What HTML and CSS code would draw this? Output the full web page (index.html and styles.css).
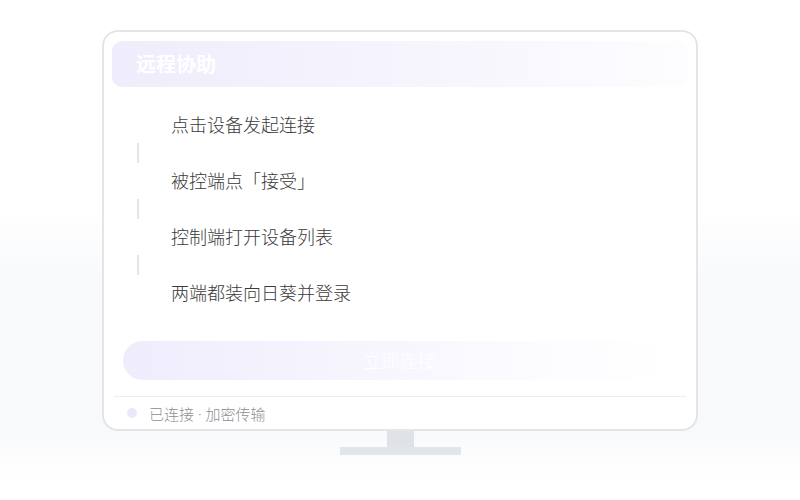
FILE: index.html
```html
<!DOCTYPE html>
<html lang="zh-CN">
<head>
<meta charset="utf-8">
<title>远程协助</title>
<link rel="stylesheet" href="styles.css">
</head>
<body>
<div class="stage">
  <div class="monitor">
    <div class="header">远程协助</div>
    <div class="steps">
      <div class="step">点击设备发起连接</div>
      <div class="connector"></div>
      <div class="step">被控端点「接受」</div>
      <div class="connector"></div>
      <div class="step">控制端打开设备列表</div>
      <div class="connector"></div>
      <div class="step">两端都装向日葵并登录</div>
    </div>
    <div class="button">立即连接</div>
    <div class="divider"></div>
    <div class="footer">
      <span class="dot"></span>
      <span class="status">已连接 · 加密传输</span>
    </div>
  </div>
  <div class="neck"></div>
  <div class="base"></div>
</div>
</body>
</html>
```
FILE: styles.css
```css
html, body {
  margin: 0;
  padding: 0;
}
body {
  width: 800px;
  height: 500px;
  overflow: hidden;
  font-family: "Noto Sans CJK SC", "Noto Sans", sans-serif;
  background: linear-gradient(180deg, #ffffff 0%, #ffffff 42%, #f8f9fb 56%, #f8f9fb 86%, #ffffff 96%);
}
.stage {
  display: flex;
  flex-direction: column;
  align-items: center;
  padding-top: 30px;
}
.monitor {
  box-sizing: border-box;
  width: 596px;
  height: 401px;
  border: 2px solid #e3e5e9;
  border-radius: 16px;
  background: #ffffff;
  padding: 9px 8px 0 8px;
  display: flex;
  flex-direction: column;
}
.header {
  height: 46px;
  border-radius: 10px;
  background: linear-gradient(90deg, #efedfc 0%, #f5f3fd 45%, #fdfdff 100%);
  color: #ffffff;
  font-size: 20px;
  font-weight: 700;
  line-height: 46px;
  padding-left: 24px;
}
.steps {
  margin-top: 20px;
  display: flex;
  flex-direction: column;
}
.step {
  height: 36px;
  line-height: 35px;
  padding-left: 59px;
  font-size: 18px;
  font-weight: 300;
  color: #3a3a3a;
}
.connector {
  width: 2px;
  height: 20px;
  margin-left: 25px;
  background: #e4e4ea;
}
.button {
  margin-top: 30px;
  margin-left: 11px;
  width: 553px;
  height: 39px;
  border-radius: 20px;
  background: linear-gradient(90deg, #efedfc 0%, #f6f4fd 40%, #fcfcff 75%, #ffffff 100%);
  color: #ffffff;
  font-size: 18px;
  font-weight: 300;
  line-height: 39px;
  text-align: center;
}
.divider {
  margin: 16px 2px 0 2px;
  height: 1px;
  background: #eceef1;
}
.footer {
  flex: 1;
  display: flex;
  align-items: center;
  padding-left: 15px;
}
.dot {
  width: 10px;
  height: 10px;
  border-radius: 50%;
  background: #ebe8fb;
  margin-right: 12px;
}
.status {
  font-family: "Noto Sans", "Noto Sans CJK SC", sans-serif;
  font-size: 15px;
  font-weight: 300;
  color: #8e8e93;
}
.neck {
  width: 27px;
  height: 16px;
  background: #dfe2e6;
}
.base {
  width: 121px;
  height: 8px;
  background: #e2e5e9;
}
```
